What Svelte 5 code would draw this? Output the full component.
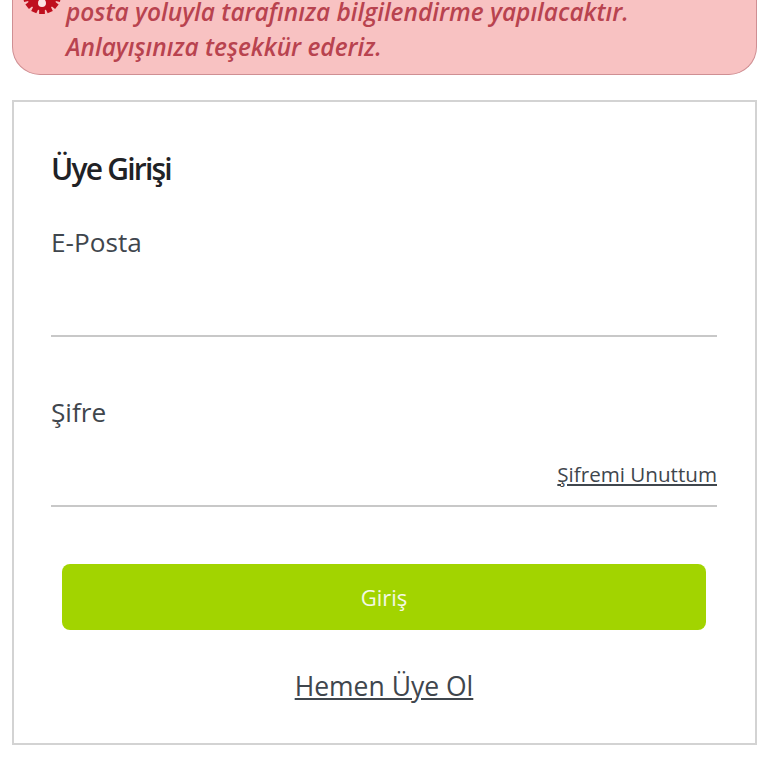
<script>
	const teeth = Array.from({ length: 14 }, (_, i) => (i * 360) / 14);
</script>

<main class="page">
	<div class="alert">
		<svg class="alert-icon" viewBox="-20 -20 40 40" aria-hidden="true">
			{#each teeth as angle}
				<rect x="-3" y="-20" width="6" height="8" fill="#bf0f1e" transform="rotate({angle})" />
			{/each}
			<circle r="16" fill="#bf0f1e" />
			<rect x="-3" y="-13" width="6" height="14" fill="#fbe3e3" />
			<circle cy="8.5" r="4.2" fill="#fbe3e3" />
		</svg>
		<p>
			posta yoluyla tarafınıza bilgilendirme yapılacaktır.<br />
			Anlayışınıza teşekkür ederiz.
		</p>
	</div>

	<form class="card" onsubmit={(e) => e.preventDefault()}>
		<h2>Üye Girişi</h2>

		<div class="field">
			<label for="email">E-Posta</label>
			<input id="email" type="email" />
		</div>

		<div class="field password">
			<label for="password">Şifre</label>
			<input id="password" type="password" />
			<a class="forgot" href="#forgot">Şifremi Unuttum</a>
		</div>

		<button type="submit">Giriş</button>
		<a class="register" href="#register">Hemen Üye Ol</a>
	</form>
</main>

<style>
	:global(body) {
		margin: 0;
		background: #fff;
		font-family: 'Open Sans', 'Noto Sans', sans-serif;
		overflow: hidden;
	}

	.page {
		height: 768px;
		overflow: hidden;
		padding: 0 11px 0 12px;
		box-sizing: border-box;
	}

	.alert {
		position: relative;
		height: 114px;
		margin-top: -39px;
		padding: 33px 20px 0 53px;
		box-sizing: border-box;
		background: #f8c2c2;
		border: 1px solid #cf8f93;
		border-top: 0;
		border-radius: 0 0 28px 28px;
	}

	.alert-icon {
		position: absolute;
		left: 10px;
		top: 15px;
		width: 38px;
		height: 38px;
	}

	.alert p {
		margin: 0;
		color: #b8434f;
		font-size: 24.45px;
		line-height: 35px;
		font-weight: 600;
		font-style: italic;
		white-space: nowrap;
	}

	.card {
		display: flex;
		flex-direction: column;
		height: 645px;
		margin-top: 25px;
		padding: 0 38px 0 37px;
		box-sizing: border-box;
		border: 2px solid #d3d3d3;
	}

	h2 {
		margin: 46px 0 0;
		color: #1f2226;
		font-size: 30px;
		line-height: 42px;
		font-weight: 600;
		letter-spacing: -1.8px;
	}

	.field {
		position: relative;
		display: flex;
		flex-direction: column;
		margin-top: 34px;
	}

	.password {
		margin-top: 57px;
	}

	label {
		color: #3f464d;
		font-size: 26.2px;
		line-height: 36px;
	}

	input {
		height: 75px;
		padding: 0;
		border: 0;
		border-bottom: 2px solid #c8c8c8;
		outline: 0;
		background: transparent;
	}

	.forgot {
		position: absolute;
		right: 0;
		bottom: 18px;
		color: #3f464d;
		font-size: 20.6px;
		line-height: 30px;
	}

	button {
		height: 66px;
		margin: 57px 11px 0;
		border: 0;
		border-radius: 8px;
		background: #a2d400;
		color: #f4f8e6;
		font-family: inherit;
		font-size: 22px;
	}

	.register {
		align-self: center;
		margin-top: 36px;
		color: #3f464d;
		font-size: 26.5px;
		line-height: 40px;
	}
</style>
